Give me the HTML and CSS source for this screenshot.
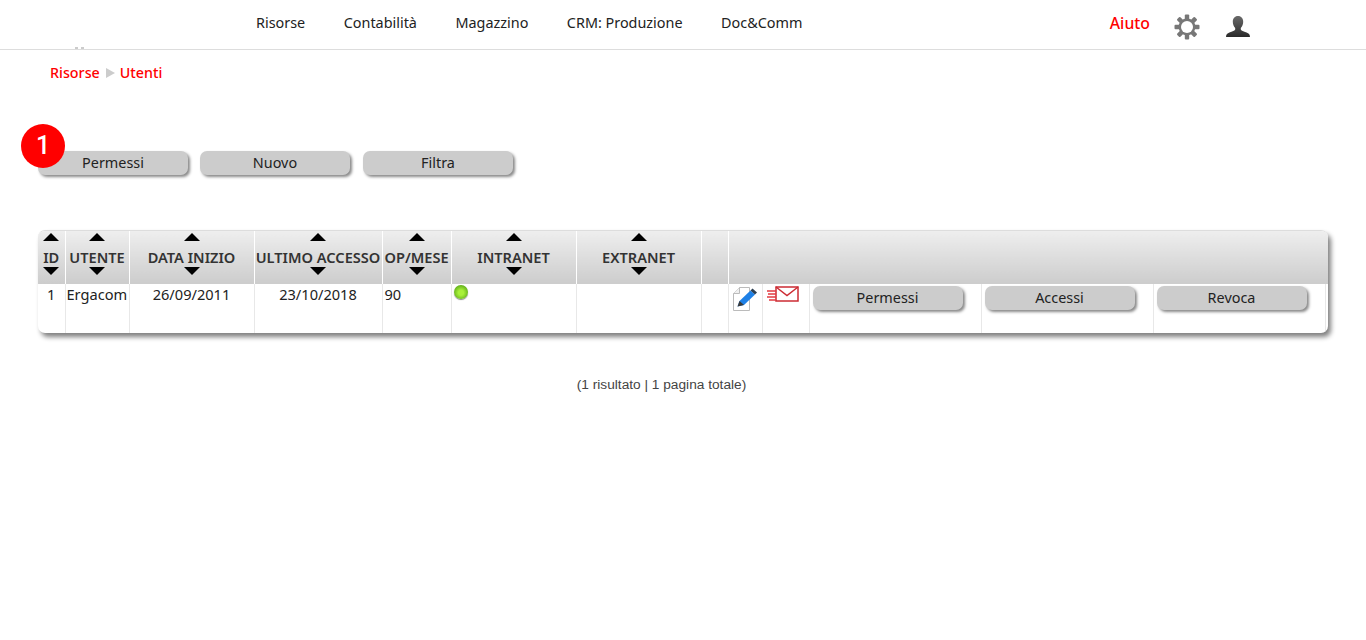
FILE: index.html
```html
<!DOCTYPE html>
<html lang="it">
<head>
    <meta charset="UTF-8">
    <title>Utenti</title>
    <link rel="stylesheet" href="styles.css">
</head>
<body>
    <header class="topbar">
        <span class="logo-edge"></span>
        <nav class="menu">
            <a href="#">Risorse</a>
            <a href="#">Contabilità</a>
            <a href="#">Magazzino</a>
            <a href="#">CRM: Produzione</a>
            <a href="#">Doc&amp;Comm</a>
        </nav>
        <div class="tools">
            <a href="#" class="help">Aiuto</a>
            <svg class="gear" width="26" height="26" viewBox="0 0 26 26">
                <g fill="#777">
                    <rect x="10.800" y="0.500" width="4.400" height="25" rx="1"/>
                    <rect x="10.800" y="0.500" width="4.400" height="25" rx="1" transform="rotate(45 13 13)"/>
                    <rect x="10.800" y="0.500" width="4.400" height="25" rx="1" transform="rotate(90 13 13)"/>
                    <rect x="10.800" y="0.500" width="4.400" height="25" rx="1" transform="rotate(135 13 13)"/>
                </g>
                <circle cx="13" cy="13" r="8.400" fill="#777"/>
                <circle cx="13" cy="13" r="6" fill="#fff"/>
            </svg>
            <svg class="user" width="26" height="24" viewBox="0 0 26 24">
                <defs>
                    <linearGradient id="userFill" x1="0" y1="0" x2="0" y2="1">
                        <stop offset="0" stop-color="#6a6a6a"/>
                        <stop offset="1" stop-color="#2a2a2a"/>
                    </linearGradient>
                </defs>
                <path fill="url(#userFill)" d="M13 1c3.300 0 5.200 2.500 5.200 5.800 0 2.600-1 4.800-2.400 6.200v1.600c0 1 3 1.900 5.800 3 2 .8 3.400 1.800 3.400 4.400H1c0-2.600 1.400-3.600 3.400-4.400 2.800-1.100 5.800-2 5.800-3V13C8.800 11.600 7.800 9.400 7.800 6.800 7.800 3.500 9.700 1 13 1z"/>
            </svg>
        </div>
    </header>

    <main class="content">
        <div class="breadcrumb">
            <a href="#">Risorse</a>
            <span class="sep"></span>
            <a href="#">Utenti</a>
        </div>

        <div class="actions">
            <span class="badge">1</span>
            <button class="btn">Permessi</button>
            <button class="btn">Nuovo</button>
            <button class="btn">Filtra</button>
        </div>

        <div class="grid-wrap">
            <table class="grid">
                <colgroup>
                    <col class="c-id"><col class="c-user"><col class="c-date"><col class="c-access">
                    <col class="c-op"><col class="c-net"><col class="c-net"><col class="c-blank">
                    <col class="c-edit"><col class="c-mail"><col class="c-btn"><col class="c-btn"><col class="c-btn"><col>
                </colgroup>
                <thead>
                    <tr>
                        <th><i class="up"></i>ID<i class="down"></i></th>
                        <th><i class="up"></i>UTENTE<i class="down"></i></th>
                        <th><i class="up"></i>DATA INIZIO<i class="down"></i></th>
                        <th><i class="up"></i>ULTIMO ACCESSO<i class="down"></i></th>
                        <th><i class="up"></i>OP/MESE<i class="down"></i></th>
                        <th><i class="up"></i>INTRANET<i class="down"></i></th>
                        <th><i class="up"></i>EXTRANET<i class="down"></i></th>
                        <th></th>
                        <th colspan="6"></th>
                    </tr>
                </thead>
                <tbody>
                    <tr>
                        <td class="center">1</td>
                        <td class="name">Ergacom</td>
                        <td class="center">26/09/2011</td>
                        <td class="center">23/10/2018</td>
                        <td>90</td>
                        <td><span class="led"></span></td>
                        <td></td>
                        <td></td>
                        <td class="icon edit">
                            <svg width="26" height="26" viewBox="0 0 26 26">
                                <path d="M1.500 7.500 7.500 1.500H17.500V24.500H1.500z" fill="#fff" stroke="#bbb"/>
                                <path d="M1.500 7.500H7.500V1.500" fill="#f0f0f0" stroke="#bbb"/>
                                <path d="M5.500 20.500 7.500 15 18.500 4.500 23 8.500 12 19z" fill="#1e80e6"/>
                                <path d="M18.500 4.500 20.500 2.500 25 6.500 23 8.500z" fill="#2c3e50"/>
                                <path d="M5.500 20.500 7.500 15 12 19z" fill="#3a3a3a"/>
                            </svg>
                        </td>
                        <td class="icon">
                            <svg width="32" height="18" viewBox="0 0 32 18">
                                <rect x="9" y="1" width="22" height="14" fill="#fff" stroke="#cc2b33" stroke-width="1.500"/>
                                <path d="M9 1 20 9.500 31 1" fill="none" stroke="#cc2b33" stroke-width="1.500"/>
                                <path d="M0 5h9M1 8h8M0 11h9M2 14h7" stroke="#e23b42" stroke-width="1.500"/>
                            </svg>
                        </td>
                        <td><button class="btn">Permessi</button></td>
                        <td><button class="btn">Accessi</button></td>
                        <td><button class="btn">Revoca</button></td>
                        <td></td>
                    </tr>
                </tbody>
            </table>
        </div>

        <p class="pager">(1 risultato | 1 pagina totale)</p>
    </main>
</body>
</html>
```

FILE: styles.css
```css
body {
    margin: 0;
    background-color: #ffffff;
    font-family: "Noto Sans", "Open Sans", sans-serif;
    font-size: 14.4px;
    color: #222222;
}
a {
    text-decoration: none;
    color: inherit;
}
.topbar {
    position: relative;
    display: flex;
    justify-content: space-between;
    align-items: center;
    height: 49px;
    border-bottom: 1px solid #dddddd;
    padding: 0 115px 0 256px;
}
.logo-edge {
    position: absolute;
    left: 75px;
    top: 47px;
    width: 9px;
    height: 2px;
    background: linear-gradient(90deg, #cccccc 3px, transparent 3px, transparent 6px, #cccccc 6px);
}
.menu {
    display: flex;
    gap: 38.500px;
    margin-top: -5px;
}
.tools {
    display: flex;
    align-items: center;
}
.help {
    color: #ff0000;
    font-size: 15.8px;
    font-weight: 500;
    margin-right: 24px;
    margin-top: -4px;
}
.gear {
    margin-right: 25px;
    margin-top: 5px;
}
.user {
    margin-top: 4px;
}
.content {
    padding: 0 37px 0 38px;
}
.breadcrumb {
    display: flex;
    align-items: center;
    height: 20px;
    margin: 12px 0 0 12px;
    color: #ff0000;
    font-weight: 500;
    font-size: 14.3px;
}
.sep {
    width: 0;
    height: 0;
    margin: 2px 5px 0 6px;
    border-left: 9px solid #cccccc;
    border-top: 5px solid transparent;
    border-bottom: 5px solid transparent;
}
.actions {
    position: relative;
    display: flex;
    gap: 12px;
    margin: 69px 0 0 0;
}
.actions .btn:last-child {
    margin-left: 1px;
}
.badge {
    position: absolute;
    left: -17px;
    top: -27px;
    width: 44px;
    height: 44px;
    border-radius: 50%;
    background-color: #ff0000;
    color: #ffffff;
    font-family: Roboto, "Liberation Sans", sans-serif;
    font-size: 25px;
    font-weight: 500;
    line-height: 44px;
    text-align: center;
}
.btn {
    width: 150px;
    height: 24px;
    padding: 0 0 1px;
    border: 0;
    border-radius: 7px;
    background-color: #cccccc;
    box-shadow: 2px 2px 3px #888888;
    font-family: inherit;
    font-size: 14.4px;
    color: #222222;
}
.grid-wrap {
    width: 1290px;
    margin: 55px 0 0 0;
    border-radius: 7px;
    border-top: 1px solid #dddddd;
    box-shadow: 3px 4px 5px #808080;
    overflow: hidden;
}
.grid {
    width: 100%;
    table-layout: fixed;
    border-collapse: collapse;
}
.c-id { width: 27px; }
.c-user { width: 64px; }
.c-date { width: 125px; }
.c-access { width: 128px; }
.c-op { width: 69px; }
.c-net { width: 125px; }
.c-blank { width: 27px; }
.c-edit { width: 34px; }
.c-mail { width: 47px; }
.c-btn { width: 172px; }
.grid th {
    height: 53px;
    padding: 2px 0 0;
    box-sizing: border-box;
    background: linear-gradient(#eeeeee, #cccccc);
    border-right: 1px solid #ffffff;
    color: #333333;
    font-size: 14.6px;
    font-weight: 600;
    line-height: 16px;
    text-align: center;
    vertical-align: top;
    white-space: nowrap;
}
.grid th:last-child {
    border-right: 0;
}
.up, .down {
    display: block;
    width: 0;
    height: 0;
    margin: 0 auto;
    border-left: 8px solid transparent;
    border-right: 8px solid transparent;
}
.up {
    border-bottom: 8px solid #000000;
    margin-bottom: 8px;
}
.down {
    border-top: 8px solid #000000;
    margin-top: 2px;
}
.grid td {
    height: 49px;
    padding: 0 2px 2px;
    border-right: 1px solid #e8e8e8;
    box-sizing: border-box;
    font-size: 14.6px;
    vertical-align: top;
    white-space: nowrap;
}
.grid td:last-child {
    border-right: 0;
}
.grid .center {
    text-align: center;
}
.grid .name {
    padding-left: 1px;
}
.grid .icon {
    padding: 2px 0 0 4px;
}
.grid .edit {
    padding-left: 3px;
}
.grid td .btn {
    display: block;
    margin: 2px 0 0 1px;
}
.led {
    display: block;
    width: 14px;
    height: 14px;
    margin-top: 1px;
    border-radius: 50%;
    background: radial-gradient(circle at 50% 55%, #a8f03a 25%, #4a9a10 90%);
    box-shadow: 0 1px 1px #888888;
}
.pager {
    margin: 44px 0 0 0;
    width: 1247px;
    text-align: center;
    font-family: "Liberation Sans", Arial, sans-serif;
    font-size: 13.7px;
    color: #444444;
}
```
